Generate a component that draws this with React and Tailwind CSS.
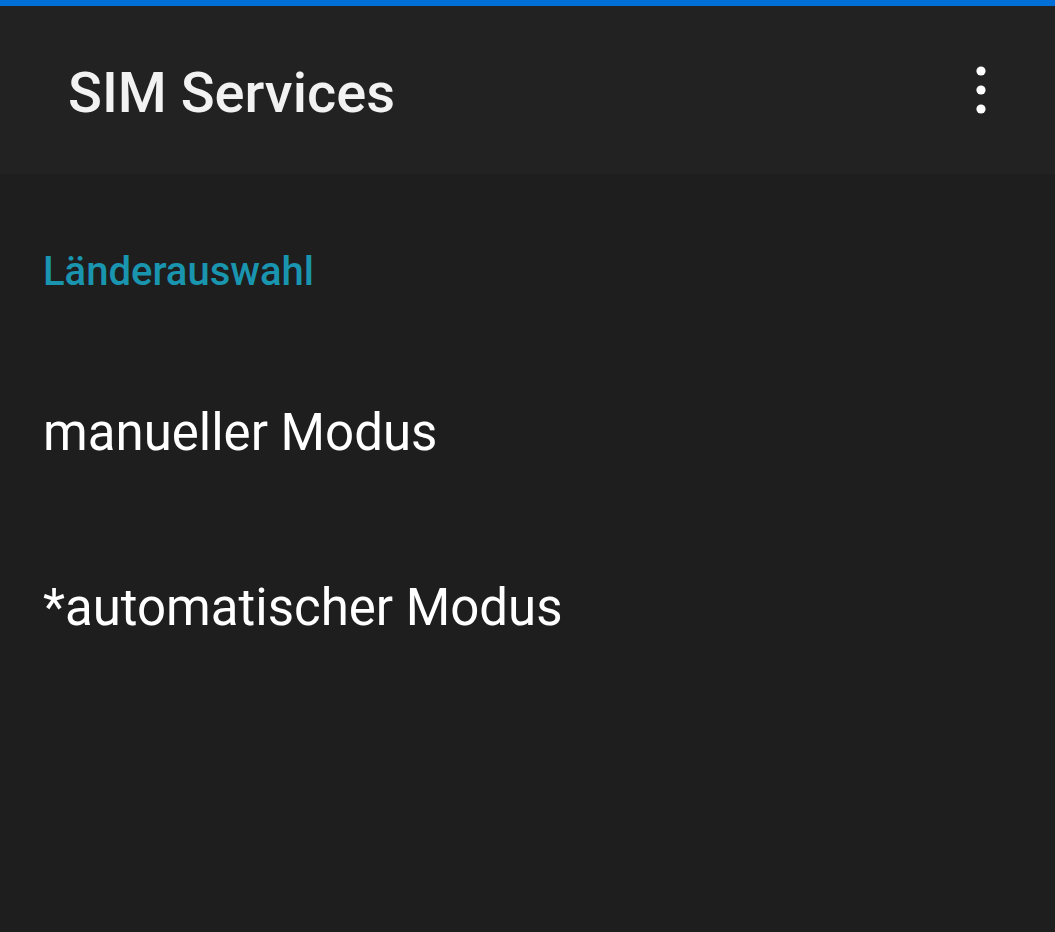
import React from 'react';

const MoreIcon = () => (
    <svg width="12" height="50" viewBox="0 0 12 50" fill="#ffffff">
        <circle cx="6" cy="6" r="4.6" />
        <circle cx="6" cy="25" r="4.6" />
        <circle cx="6" cy="44" r="4.6" />
    </svg>
);

const options = ['manueller Modus', '*automatischer Modus'];

export default function App() {
    return (
        <div className="w-[1055px] h-[932px] bg-[#1e1e1e] flex flex-col" style={{ fontFamily: 'Roboto, "Noto Sans", sans-serif' }}>
            <div className="h-[6px] bg-[#0070d8]" />
            <header className="h-[168px] bg-[#222222] flex items-center justify-between pl-[68px] pr-[68px]">
                <h1 className="text-[56px] font-medium text-[#f2f2f2] leading-none mt-[6px]">SIM Services</h1>
                <MoreIcon />
            </header>
            <main className="flex flex-col px-[43px]">
                <h2 className="text-[40px] font-medium text-[#1a95b0] leading-none mt-[78px]">Länderauswahl</h2>
                <ul className="mt-[115px] flex flex-col gap-[124px]">
                    {options.map((o) => (
                        <li key={o} className="text-[51px] text-white leading-none">{o}</li>
                    ))}
                </ul>
            </main>
        </div>
    );
}
